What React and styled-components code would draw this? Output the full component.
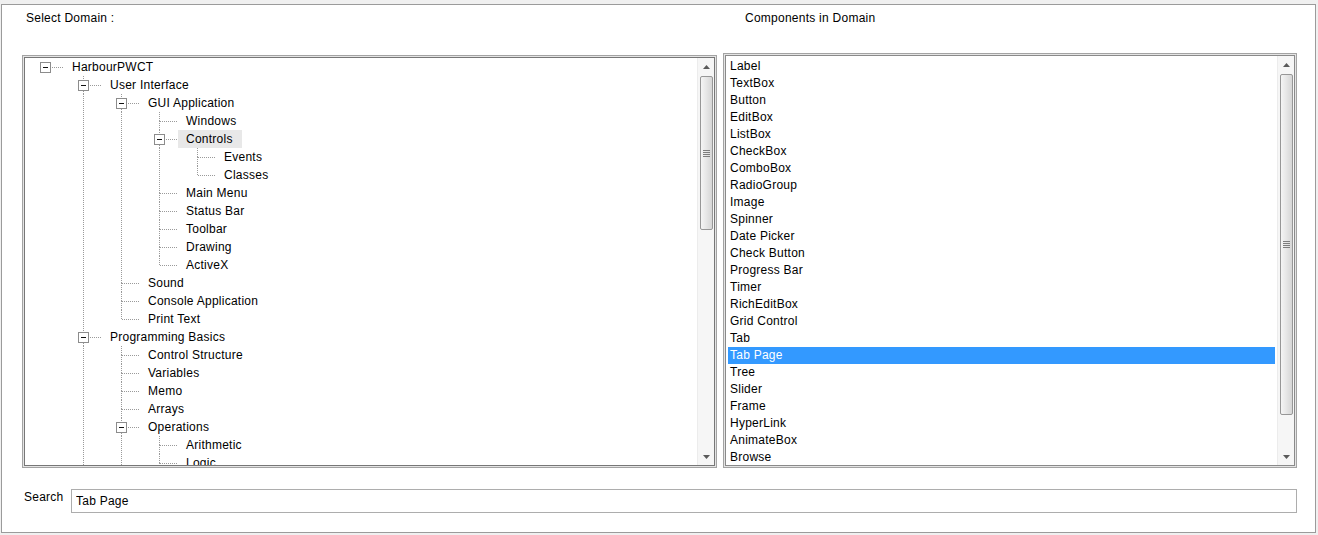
import styled, { createGlobalStyle } from "styled-components";

const GlobalStyle = createGlobalStyle`
  html, body {
    margin: 0;
    padding: 0;
    background: #f0f0f0;
  }
  body {
    font-family: "Liberation Sans", Arial, sans-serif;
    font-size: 12px;
    letter-spacing: 0.25px;
    color: #000;
  }
`;

const tree = [
  {
    label: "HarbourPWCT",
    children: [
      {
        label: "User Interface",
        children: [
          {
            label: "GUI Application",
            children: [
              { label: "Windows" },
              {
                label: "Controls",
                active: true,
                children: [{ label: "Events" }, { label: "Classes" }],
              },
              { label: "Main Menu" },
              { label: "Status Bar" },
              { label: "Toolbar" },
              { label: "Drawing" },
              { label: "ActiveX" },
            ],
          },
          { label: "Sound" },
          { label: "Console Application" },
          { label: "Print Text" },
        ],
      },
      {
        label: "Programming Basics",
        children: [
          { label: "Control Structure" },
          { label: "Variables" },
          { label: "Memo" },
          { label: "Arrays" },
          {
            label: "Operations",
            children: [
              { label: "Arithmetic" },
              { label: "Logic" },
              { label: "Comparison" },
            ],
          },
          { label: "Functions" },
        ],
      },
      { label: "Database" },
    ],
  },
];

const components = [
  "Label", "TextBox", "Button", "EditBox", "ListBox", "CheckBox", "ComboBox",
  "RadioGroup", "Image", "Spinner", "Date Picker", "Check Button", "Progress Bar",
  "Timer", "RichEditBox", "Grid Control", "Tab", "Tab Page", "Tree", "Slider",
  "Frame", "HyperLink", "AnimateBox", "Browse",
];

function flatten(nodes, level, guides, out) {
  nodes.forEach((node, i) => {
    const hasNext = i < nodes.length - 1;
    const hasChildren = !!(node.children && node.children.length);
    out.push({
      label: node.label,
      active: node.active,
      level,
      guides,
      hasNext,
      hasChildren,
      firstRoot: level === 0 && i === 0,
    });
    if (hasChildren) flatten(node.children, level + 1, guides.concat(hasNext), out);
  });
  return out;
}

const rows = flatten(tree, 0, [], []);

const Frame = styled.div`
  margin: 4px 0 0 1px;
  width: 1315px;
  height: 529px;
  box-sizing: border-box;
  background: #fff;
  border: 1px solid #9b9b9b;
  padding: 0 18px 19px 20px;
  display: flex;
  flex-direction: column;
`;

const Panels = styled.div`
  display: grid;
  grid-template-columns: 695px 574px;
  column-gap: 6px;
`;

const Column = styled.div`
  display: flex;
  flex-direction: column;
`;

const HeaderLabel = styled.div`
  height: ${(p) => p.$height}px;
  box-sizing: border-box;
  padding: 6px 0 0 ${(p) => p.$indent}px;
  line-height: 14px;
`;

const SunkenBox = styled.div`
  height: ${(p) => p.$height}px;
  box-sizing: border-box;
  border: 1px solid #a3a3a3;
  padding: 1px;
  background: #e4e4e4;
  display: flex;
`;

const BoxInner = styled.div`
  flex: 1;
  display: flex;
  border: 1px solid ${(p) => p.$edge};
  background: #fff;
  overflow: hidden;
`;

const TreeArea = styled.div`
  flex: 1;
  overflow: hidden;
  padding-left: 9px;
`;

const TreeRow = styled.div`
  display: flex;
  align-items: center;
  height: 18px;
  white-space: nowrap;
`;

const TreeLabel = styled.span`
  line-height: 18px;
  padding: 0 9px 0 8px;
  background: ${(p) => (p.$active ? "#e8e8e8" : "transparent")};
`;

const ListArea = styled.div`
  flex: 1;
  overflow: hidden;
  padding: 2px 2px 0 2px;
`;

const ListItem = styled.div`
  height: 17px;
  line-height: 17px;
  padding-left: 2px;
  white-space: nowrap;
  background: ${(p) => (p.$selected ? "#3399ff" : "transparent")};
  color: ${(p) => (p.$selected ? "#fff" : "#000")};
`;

const ScrollTrack = styled.div`
  width: 17px;
  flex-shrink: 0;
  display: flex;
  flex-direction: column;
  background: #f6f6f6;
  border-left: 1px solid #ececec;
  box-sizing: border-box;
`;

const ArrowButton = styled.div`
  height: 17px;
  flex-shrink: 0;
  display: flex;
  align-items: center;
  justify-content: center;
`;

const TrackBody = styled.div`
  flex: 1;
  display: flex;
  flex-direction: column;
  align-items: center;
`;

const Thumb = styled.div`
  margin-top: ${(p) => p.$offset}px;
  height: ${(p) => p.$size}px;
  width: 13px;
  box-sizing: border-box;
  border: 1px solid #979797;
  border-radius: 2px;
  background: linear-gradient(to right, #f5f5f5, #e6e6e6 50%, #d6d6d6);
  display: flex;
  align-items: center;
  justify-content: center;
`;

const SearchRow = styled.div`
  display: flex;
  align-items: flex-start;
  margin-top: 21px;
`;

const SearchLabel = styled.label`
  width: 49px;
  box-sizing: border-box;
  padding-left: 2px;
  margin-top: 1px;
  line-height: 14px;
`;

const SearchInput = styled.input`
  flex: 1;
  height: 24px;
  box-sizing: border-box;
  border: 1px solid #adadad;
  padding: 0 4px;
  margin: 0;
  font-family: "Liberation Sans", Arial, sans-serif;
  font-size: 12px;
  letter-spacing: 0.25px;
  color: #000;
  outline: none;
  background: #fff;
`;

const LINE = "#9a9a9a";

function Guide({ on }) {
  return (
    <svg width="38" height="18" style={{ flexShrink: 0, display: "block" }}>
      {on && (
        <line x1="11.5" y1="0" x2="11.5" y2="18" stroke={LINE} strokeDasharray="1 1" />
      )}
    </svg>
  );
}

function Connector({ row }) {
  return (
    <svg width="30" height="18" style={{ flexShrink: 0, display: "block" }}>
      {!row.firstRoot && (
        <line x1="11.5" y1="0" x2="11.5" y2="9" stroke={LINE} strokeDasharray="1 1" />
      )}
      {row.hasNext && (
        <line x1="11.5" y1="9" x2="11.5" y2="18" stroke={LINE} strokeDasharray="1 1" />
      )}
      <line x1="12" y1="9.5" x2="30" y2="9.5" stroke={LINE} strokeDasharray="1 1" />
      {row.hasChildren && (
        <g>
          <rect x="6.5" y="4.5" width="10" height="10" fill="#fff" stroke="#8c8c8c" />
          <line x1="9" y1="9.5" x2="14" y2="9.5" stroke="#111" />
        </g>
      )}
    </svg>
  );
}

function Arrow({ down }) {
  return (
    <svg width="7" height="4">
      <polygon
        points={down ? "0,0 7,0 3.5,4" : "3.5,0 7,4 0,4"}
        fill="#5a5a5a"
      />
    </svg>
  );
}

function Grip() {
  return (
    <svg width="7" height="7">
      {[0.5, 2.5, 4.5, 6.5].map((y) => (
        <line key={y} x1="0" y1={y} x2="7" y2={y} stroke="#7d7d7d" />
      ))}
    </svg>
  );
}

function Scrollbar({ thumbTop, thumbSize }) {
  return (
    <ScrollTrack>
      <ArrowButton>
        <Arrow />
      </ArrowButton>
      <TrackBody>
        <Thumb $offset={thumbTop} $size={thumbSize}>
          <Grip />
        </Thumb>
      </TrackBody>
      <ArrowButton>
        <Arrow down />
      </ArrowButton>
    </ScrollTrack>
  );
}

export default function App() {
  return (
    <>
      <GlobalStyle />
      <Frame>
        <Panels>
          <Column>
            <HeaderLabel $height={50} $indent={4}>Select Domain :</HeaderLabel>
            <SunkenBox $height={413}>
              <BoxInner $edge="#777">
                <TreeArea>
                  {rows.map((row, i) => (
                    <TreeRow key={i}>
                      {row.guides.map((on, k) => (
                        <Guide key={k} on={on} />
                      ))}
                      <Connector row={row} />
                      <TreeLabel $active={row.active}>{row.label}</TreeLabel>
                    </TreeRow>
                  ))}
                </TreeArea>
                <Scrollbar thumbTop={1} thumbSize={154} />
              </BoxInner>
            </SunkenBox>
          </Column>
          <Column>
            <HeaderLabel $height={48} $indent={22}>Components in Domain</HeaderLabel>
            <SunkenBox $height={415}>
              <BoxInner $edge="#8a8a8a">
                <ListArea>
                  {components.map((c) => (
                    <ListItem key={c} $selected={c === "Tab Page"}>
                      {c}
                    </ListItem>
                  ))}
                </ListArea>
                <Scrollbar thumbTop={1} thumbSize={341} />
              </BoxInner>
            </SunkenBox>
          </Column>
        </Panels>
        <SearchRow>
          <SearchLabel>Search</SearchLabel>
          <SearchInput readOnly defaultValue="Tab Page" />
        </SearchRow>
      </Frame>
    </>
  );
}
